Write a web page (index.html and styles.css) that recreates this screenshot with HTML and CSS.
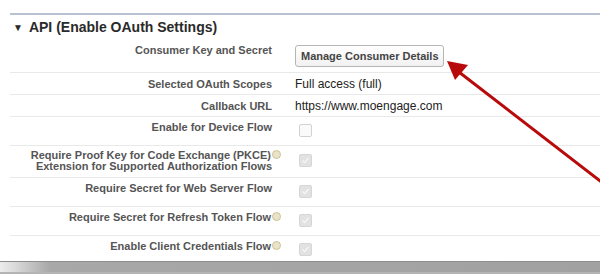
FILE: index.html
```html
<!DOCTYPE html>
<html lang="en">
<head>
  <meta charset="UTF-8" />
  <meta name="viewport" content="width=device-width, initial-scale=1.0" />
  <title>API (Enable OAuth Settings)</title>
  <link rel="stylesheet" href="styles.css">
</head>
<body>
  <div class="section">
    <h3 class="section-title"><span class="caret">&#9660;</span>API (Enable OAuth Settings)</h3>

    <div class="row row-first">
      <div class="label">Consumer Key and Secret</div>
      <div class="value"><button class="btn">Manage Consumer Details</button></div>
    </div>
    <div class="row row-text">
      <div class="label">Selected OAuth Scopes</div>
      <div class="value">Full access (full)</div>
    </div>
    <div class="row row-text">
      <div class="label">Callback URL</div>
      <div class="value">https://www.moengage.com</div>
    </div>
    <div class="row row-check">
      <div class="label">Enable for Device Flow</div>
      <div class="value"><span class="checkbox"></span></div>
    </div>
    <div class="row row-check row-double">
      <div class="label">Require Proof Key for Code Exchange (PKCE)<span class="help"></span><br>Extension for Supported Authorization Flows</div>
      <div class="value"><span class="checkbox checked"><svg viewBox="0 0 13 13"><path d="M3 6.5 L5.5 9 L10 3.5" /></svg></span></div>
    </div>
    <div class="row row-check">
      <div class="label">Require Secret for Web Server Flow</div>
      <div class="value"><span class="checkbox checked"><svg viewBox="0 0 13 13"><path d="M3 6.5 L5.5 9 L10 3.5" /></svg></span></div>
    </div>
    <div class="row row-check">
      <div class="label">Require Secret for Refresh Token Flow<span class="help"></span></div>
      <div class="value"><span class="checkbox checked"><svg viewBox="0 0 13 13"><path d="M3 6.5 L5.5 9 L10 3.5" /></svg></span></div>
    </div>
    <div class="row row-check row-last">
      <div class="label">Enable Client Credentials Flow<span class="help"></span></div>
      <div class="value"><span class="checkbox checked"><svg viewBox="0 0 13 13"><path d="M3 6.5 L5.5 9 L10 3.5" /></svg></span></div>
    </div>
  </div>
  <div class="footer-bar"></div>

  <svg class="arrow" width="600" height="274" viewBox="0 0 600 274">
    <line x1="604" y1="184" x2="455" y2="69" />
    <polygon points="447,61 468,65 455,80" />
  </svg>
</body>
</html>
```

FILE: styles.css
```css
body {
  margin: 0;
  padding: 0;
  background: #fff;
  font-family: "Liberation Sans", Arial, sans-serif;
  color: #222;
  position: relative;
  height: 274px;
  overflow: hidden;
}
.section {
  margin-top: 13px;
  margin-left: 10px;
  border-top: 2px solid #b9c2d3;
}
.section-title {
  margin: 0;
  height: 24px;
  line-height: 24px;
  font-size: 14px;
  font-weight: bold;
  color: #2a2a2a;
  padding-left: 3px;
}
.caret {
  font-size: 10px;
  margin-right: 6px;
  vertical-align: 1px;
}
.row {
  display: flex;
  align-items: flex-start;
  border-bottom: 1px solid #e9e9e9;
  box-sizing: border-box;
}
.label {
  width: 262px;
  flex: none;
  text-align: right;
  font-size: 11px;
  font-weight: bold;
  color: #555;
  line-height: 12px;
}
.value {
  margin-left: 23px;
  font-size: 12px;
  line-height: 14px;
}
.row-first {
  height: 34px;
}
.row-first .label {
  padding-top: 5px;
}
.row-first .value {
  padding-top: 6px;
}
.row-text {
  height: 22px;
  align-items: center;
}
.row-check {
  height: 29px;
}
.row-check .label {
  padding-top: 4px;
}
.row-check .value {
  padding-top: 7px;
}
.row-double {
  height: 32px;
}
.row-double .label {
  line-height: 11px;
  padding-top: 4px;
}
.row-double .value {
  padding-top: 8px;
}
.row-last {
  height: 25px;
  border-bottom: none;
}
.btn {
  display: block;
  width: 149px;
  height: 22px;
  padding: 0 4px 0 5px;
  border: 1px solid #b5b5b5;
  border-radius: 3px;
  background: linear-gradient(#ffffff, #f1f1f1);
  font-family: "Liberation Sans", Arial, sans-serif;
  font-size: 11px;
  font-weight: bold;
  color: #444;
  text-align: left;
  white-space: nowrap;
}
.checkbox {
  display: block;
  width: 13px;
  height: 13px;
  margin-left: 4px;
  box-sizing: border-box;
  border: 1px solid #d2d2d2;
  border-radius: 2px;
  background: #fafafa;
}
.checkbox.checked {
  background: #e2e2e2;
  border-color: #d6d6d6;
}
.checkbox svg {
  display: block;
  width: 11px;
  height: 11px;
}
.checkbox path {
  fill: none;
  stroke: #f6f6f6;
  stroke-width: 1.6;
}
.help {
  display: inline-block;
  width: 7px;
  height: 7px;
  margin-left: 1px;
  margin-right: -9px;
  border: 1px solid #cfc18f;
  border-radius: 50%;
  background: #e9e3cc;
  vertical-align: 0;
}
.footer-bar {
  height: 13px;
  border-top: 1px solid #8e8e8e;
  border-bottom: 2px solid #b4b4b4;
  box-sizing: border-box;
  background: linear-gradient(to right, #ececec 0, #dadada 15px, #c4c4c4 30px, #a8a8a8 50px, #a1a1a1 100%);
}
.arrow {
  position: absolute;
  left: 0;
  top: 0;
  pointer-events: none;
}
.arrow line {
  stroke: #b80a0a;
  stroke-width: 3;
}
.arrow polygon {
  fill: #b80a0a;
}
```
